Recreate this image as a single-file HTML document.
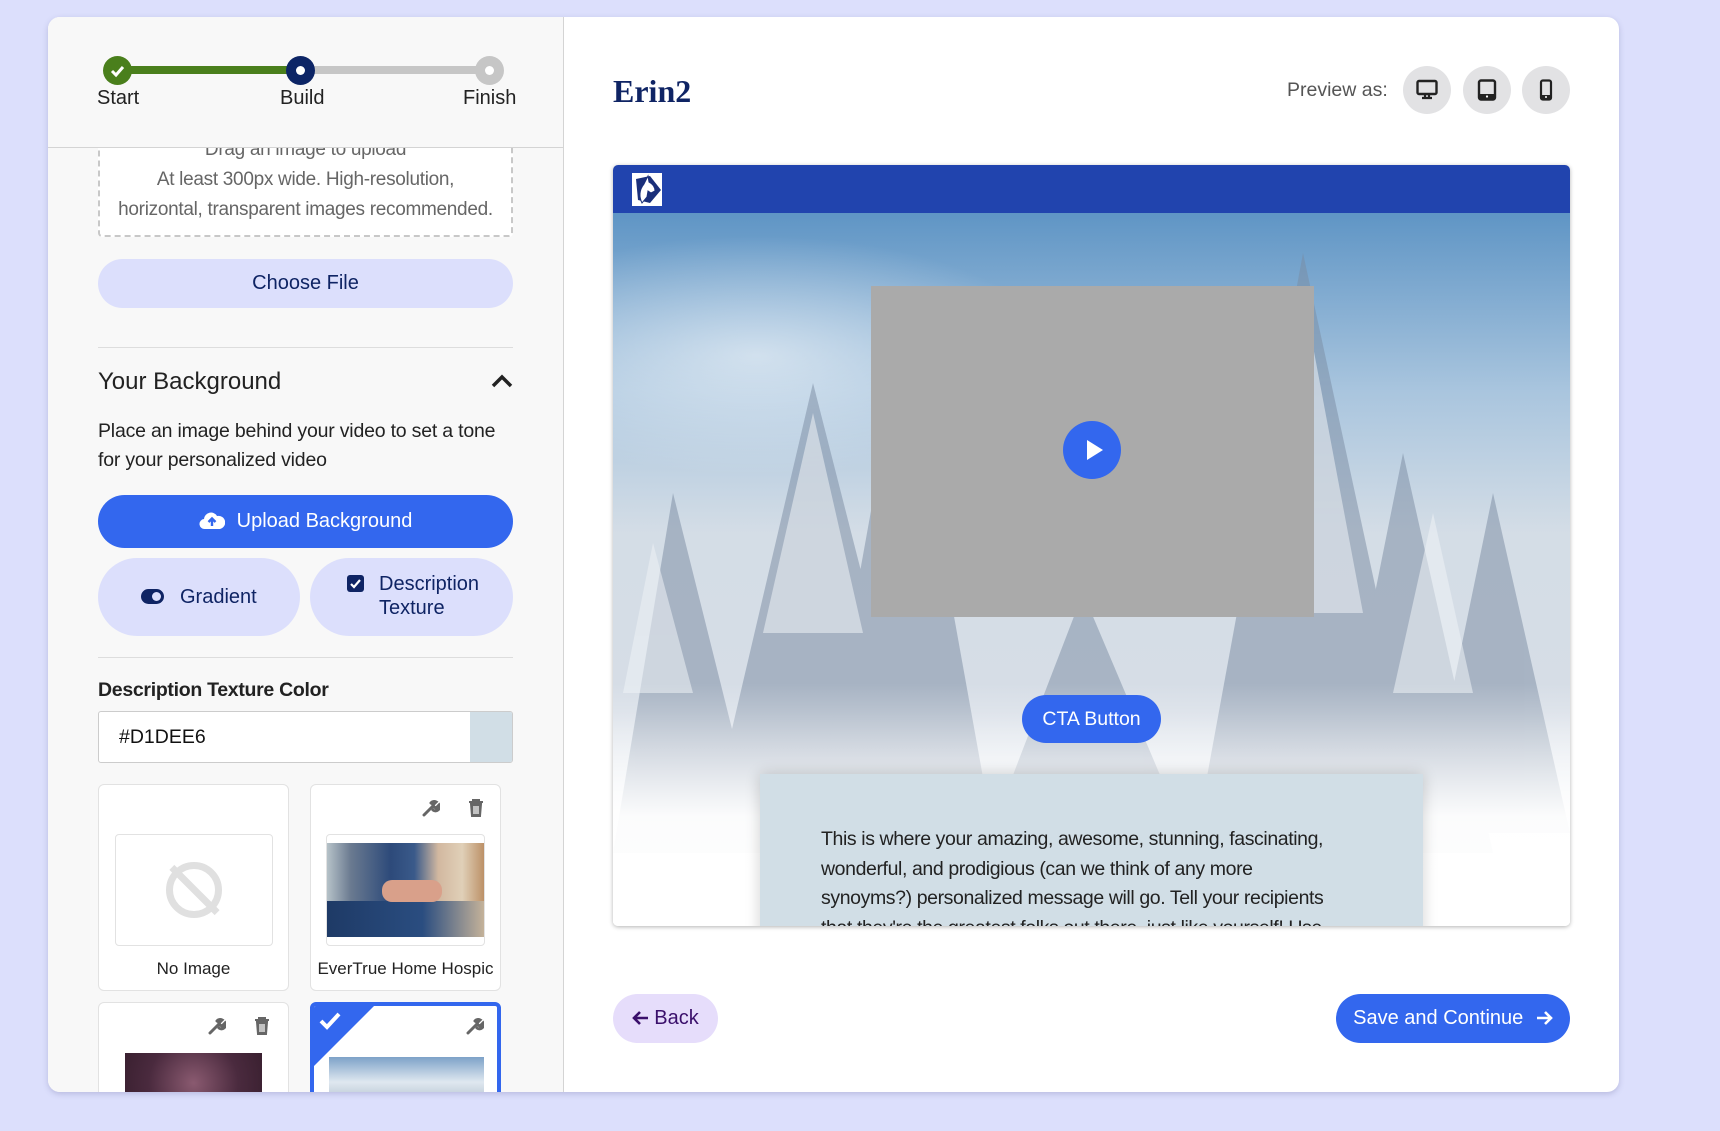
<!DOCTYPE html>
<html><head><meta charset="utf-8"><style>
*{box-sizing:border-box;margin:0;padding:0}
body{width:1720px;height:1131px;background:#dcdffc;font-family:"Liberation Sans",sans-serif;position:relative;overflow:hidden}
.abs{position:absolute}
.card{left:48px;top:17px;width:1571px;height:1075px;background:#fff;border-radius:12px;overflow:hidden;box-shadow:0 2px 6px rgba(80,80,140,.25)}
.left{left:0;top:0;width:516px;height:1075px;background:#f8f8f8;border-right:1px solid #d4d4d4;overflow:hidden}
.txt{white-space:nowrap}
.pill{border-radius:40px}
</style></head><body>
<div class="abs card">
 <div class="abs left">
  <div class="abs" style="left:50px;top:100px;width:415px;height:120px;border:2px dashed #c8c8c8;border-top:none;border-radius:4px;background:#fff"></div>
  <div class="abs txt" style="left:50px;top:118px;width:415px;text-align:center;color:#666;font-size:19px;line-height:30px;letter-spacing:-.3px">Drag an image to upload<br>At least 300px wide. High-resolution,<br>horizontal, transparent images recommended.</div>
  <div class="abs" style="left:0;top:0;width:516px;height:131px;background:#f8f8f8;border-bottom:1px solid #d4d4d4"></div>
  <div class="abs" style="left:69px;top:49px;width:184px;height:8px;background:#4a7f1c"></div>
  <div class="abs" style="left:253px;top:49px;width:188px;height:8px;background:#c6c6c6"></div>
  <div class="abs" style="left:55px;top:39px;width:29px;height:29px;border-radius:50%;background:#4a7f1c"></div>
  <svg class="abs" style="left:61px;top:45px" width="17" height="17" viewBox="0 0 17 17"><path d="M3 9l4 4 7-8" stroke="#fff" stroke-width="3" fill="none"/></svg>
  <div class="abs" style="left:238px;top:39px;width:29px;height:29px;border-radius:50%;background:#0d2566"></div>
  <div class="abs" style="left:248px;top:49px;width:9px;height:9px;border-radius:50%;background:#fff"></div>
  <div class="abs" style="left:427px;top:39px;width:29px;height:29px;border-radius:50%;background:#c6c6c6"></div>
  <div class="abs" style="left:437px;top:49px;width:9px;height:9px;border-radius:50%;background:#fff"></div>
  <div class="abs txt" style="left:49px;top:70px;font-size:20px;color:#222">Start</div>
  <div class="abs txt" style="left:232px;top:70px;font-size:20px;color:#222">Build</div>
  <div class="abs txt" style="left:415px;top:70px;font-size:20px;color:#222">Finish</div>
  <div class="abs pill" style="left:50px;top:242px;width:415px;height:49px;background:#dcdffc;color:#0f2464;font-size:20px;text-align:center;line-height:49px">Choose File</div>
  <div class="abs" style="left:50px;top:330px;width:415px;height:1px;background:#ddd"></div>
  <div class="abs txt" style="left:50px;top:351px;font-size:24px;color:#222">Your Background</div>
  <svg class="abs" style="left:443px;top:356px" width="22" height="16" viewBox="0 0 22 16"><path d="M2 13l9-9 9 9" stroke="#222" stroke-width="3.5" fill="none"/></svg>
  <div class="abs" style="left:50px;top:400px;font-size:19.5px;color:#222;line-height:29px;width:420px;letter-spacing:-.2px">Place an image behind your video to set a tone<br>for your personalized video</div>
  <div class="abs pill" style="left:50px;top:478px;width:415px;height:53px;background:#3367ee;color:#fff;font-size:20px;line-height:53px;text-align:center">
   <svg style="vertical-align:-3px;margin-right:12px" width="26" height="20" viewBox="0 0 26 20"><path d="M6 19a5 5 0 0 1-1-10 7 7 0 0 1 13-3 6 6 0 0 1 3 13z" fill="#fff"/><path d="M13 16V9M9.5 12l3.5-3.5 3.5 3.5" stroke="#3367ee" stroke-width="2.4" fill="none"/></svg>Upload Background</div>
  <div class="abs pill" style="left:50px;top:541px;width:202px;height:78px;background:#dcdffc;border-radius:40px"></div>
  <div class="abs" style="left:93px;top:572px;width:23px;height:15px;border-radius:8px;background:#0f2464"></div>
  <div class="abs" style="left:104px;top:575px;width:9px;height:9px;border-radius:50%;background:#dcdffc"></div>
  <div class="abs txt" style="left:132px;top:569px;font-size:20px;color:#0f2464">Gradient</div>
  <div class="abs pill" style="left:262px;top:541px;width:203px;height:78px;background:#dcdffc;border-radius:40px"></div>
  <div class="abs" style="left:299px;top:558px;width:17px;height:17px;border-radius:3px;background:#0f2464"></div>
  <svg class="abs" style="left:301px;top:560px" width="13" height="13" viewBox="0 0 13 13"><path d="M2 7l3 3 6-7" stroke="#fff" stroke-width="2.2" fill="none"/></svg>
  <div class="abs" style="left:331px;top:555px;font-size:20px;color:#0f2464;line-height:24px">Description<br>Texture</div>
  <div class="abs" style="left:50px;top:640px;width:415px;height:1px;background:#ddd"></div>
  <div class="abs txt" style="left:50px;top:662px;font-size:19.5px;color:#222;font-weight:bold;letter-spacing:-.3px">Description Texture Color</div>
  <div class="abs" style="left:50px;top:694px;width:415px;height:52px;border:1px solid #ccc;border-radius:3px;background:#fff;overflow:hidden">
   <div class="abs" style="right:0;top:0;width:42px;height:52px;background:#d1dee6"></div>
   <div class="abs txt" style="left:20px;top:14px;font-size:19.5px;color:#111">#D1DEE6</div>
  </div>
  <div class="abs" style="left:50px;top:767px;width:191px;height:207px;border:1px solid #e2e2e2;border-radius:6px;background:#fff"></div>
  <div class="abs" style="left:67px;top:817px;width:158px;height:112px;border:1px solid #e2e2e2;border-radius:4px;background:#fff"></div>
  <div class="abs" style="left:118px;top:845px;width:56px;height:56px;border-radius:50%;border:7px solid #e0e0e0"></div>
  <div class="abs" style="left:143px;top:841px;width:7px;height:64px;background:#e0e0e0;transform:rotate(-45deg)"></div>
  <div class="abs txt" style="left:50px;top:942px;width:191px;text-align:center;font-size:17px;color:#222">No Image</div>
  <div class="abs" style="left:262px;top:767px;width:191px;height:207px;border:1px solid #e2e2e2;border-radius:6px;background:#fff"></div>
  <svg class="abs" style="left:374px;top:782px" width="18" height="18" viewBox="0 0 18 18"><path d="M2 16l8-8M9 4a4 4 0 0 1 5 -1l-3 3 1 2 2 1 3-3a4 4 0 0 1-6 5" stroke="#666" stroke-width="3" fill="none" stroke-linecap="round"/></svg>
  <svg class="abs" style="left:420px;top:782px" width="16" height="18" viewBox="0 0 16 18"><path d="M1 3h14M5 3V1h6v2M3 5h10l-1 12H4z" stroke="#666" stroke-width="2" fill="#666"/><path d="M6 7v8M8 7v8M10 7v8" stroke="#fff" stroke-width="1.2"/></svg>
  <div class="abs" style="left:278px;top:817px;width:159px;height:112px;border:1px solid #e2e2e2;border-radius:4px;background:#fff;overflow:hidden">
   <div class="abs" style="left:0;top:8px;width:159px;height:94px;background:linear-gradient(90deg,#b6c2c8 0%,#6a7a90 15%,#2d4a7a 40%,#3a5a8a 55%,#d2b8a0 70%,#e0d0b8 85%,#b98b60 100%)"></div>
   <div class="abs" style="left:0;top:66px;width:159px;height:36px;background:linear-gradient(90deg,#1e3a66,#2a4d80 60%,#c9b59a)"></div>
   <div class="abs" style="left:55px;top:45px;width:60px;height:22px;border-radius:10px;background:#d9a08a"></div>
  </div>
  <div class="abs txt" style="left:262px;top:942px;width:191px;text-align:center;font-size:17px;color:#222">EverTrue Home Hospic</div>
  <div class="abs" style="left:50px;top:985px;width:191px;height:120px;border:1px solid #e2e2e2;border-radius:6px;background:#fff"></div>
  <svg class="abs" style="left:160px;top:1000px" width="18" height="18" viewBox="0 0 18 18"><path d="M2 16l8-8M9 4a4 4 0 0 1 5 -1l-3 3 1 2 2 1 3-3a4 4 0 0 1-6 5" stroke="#666" stroke-width="3" fill="none" stroke-linecap="round"/></svg>
  <svg class="abs" style="left:206px;top:1000px" width="16" height="18" viewBox="0 0 16 18"><path d="M1 3h14M5 3V1h6v2M3 5h10l-1 12H4z" stroke="#666" stroke-width="2" fill="#666"/><path d="M6 7v8M8 7v8M10 7v8" stroke="#fff" stroke-width="1.2"/></svg>
  <div class="abs" style="left:77px;top:1036px;width:137px;height:50px;background:radial-gradient(circle at 50% 60%,#8a5a70,#4a2a3e 60%,#3a2030)"></div>
  <div class="abs" style="left:262px;top:985px;width:191px;height:120px;border:4px solid #3367ee;border-radius:6px;background:#fff;overflow:hidden">
   <div class="abs" style="left:0;top:0;width:0;height:0;border-top:60px solid #3367ee;border-right:60px solid transparent"></div>
  </div>
  <svg class="abs" style="left:270px;top:994px" width="24" height="20" viewBox="0 0 24 20"><path d="M3 10l6 6L21 3" stroke="#fff" stroke-width="4" fill="none"/></svg>
  <svg class="abs" style="left:418px;top:1000px" width="18" height="18" viewBox="0 0 18 18"><path d="M2 16l8-8M9 4a4 4 0 0 1 5 -1l-3 3 1 2 2 1 3-3a4 4 0 0 1-6 5" stroke="#666" stroke-width="3" fill="none" stroke-linecap="round"/></svg>
  <div class="abs" style="left:281px;top:1040px;width:155px;height:50px;background:linear-gradient(180deg,#7da2c8,#dfe8f0 50%,#aab8c8)"></div>
 </div>
 <div class="abs txt" style="left:565px;top:56px;font-family:'Liberation Serif',serif;font-weight:bold;font-size:32px;color:#0f2464">Erin2</div>
 <div class="abs txt" style="left:1239px;top:62px;font-size:19.5px;color:#555">Preview as:</div>
 <div class="abs" style="left:1355px;top:49px;width:48px;height:48px;border-radius:50%;background:#e2e2e4"></div>
 <div class="abs" style="left:1415px;top:49px;width:48px;height:48px;border-radius:50%;background:#e2e2e4"></div>
 <div class="abs" style="left:1474px;top:49px;width:48px;height:48px;border-radius:50%;background:#e2e2e4"></div>
 <svg class="abs" style="left:1368px;top:62px" width="22" height="22" viewBox="0 0 22 22"><rect x="1.5" y="2" width="19" height="13" rx="1.5" fill="none" stroke="#222" stroke-width="2.4"/><path d="M9 15v3M13 15v3M6 19h10" stroke="#222" stroke-width="2.2"/></svg>
 <svg class="abs" style="left:1429px;top:62px" width="20" height="22" viewBox="0 0 20 22"><rect x="2" y="1.5" width="16" height="19" rx="2" fill="none" stroke="#222" stroke-width="2.4"/><rect x="2" y="15" width="16" height="5" fill="#222"/><circle cx="10" cy="17.5" r="1.1" fill="#fff"/></svg>
 <svg class="abs" style="left:1491px;top:62px" width="14" height="22" viewBox="0 0 14 22"><rect x="2" y="1.5" width="10" height="19" rx="1.8" fill="none" stroke="#222" stroke-width="2.2"/><rect x="2" y="16" width="10" height="4" fill="#222"/><circle cx="7" cy="18" r="1" fill="#fff"/></svg>
 <div class="abs" style="left:565px;top:148px;width:957px;height:761px;border-radius:5px;overflow:hidden;box-shadow:0 1px 4px rgba(0,0,0,.3)">
  <div class="abs" style="left:0;top:48px;width:957px;height:713px;background:
   radial-gradient(ellipse 300px 120px at 15% 20%,rgba(255,255,255,.55),transparent),
   linear-gradient(180deg,#5f95c5 0%,#a9c5de 25%,#d4dde6 45%,#d6dde6 70%,#eef1f5 82%,#ffffff 92%)"></div>
  <svg class="abs" style="left:0;top:48px" width="957" height="713" viewBox="0 0 957 713">
   <defs><linearGradient id="sn" x1="0" y1="0" x2="0" y2="1"><stop offset="0" stop-color="#fff" stop-opacity="0"/><stop offset=".55" stop-color="#fff" stop-opacity=".95"/><stop offset="1" stop-color="#fff"/></linearGradient></defs>
   <g fill="#7a8ba2" opacity=".5">
    <path d="M60 280L0 640h150z"/><path d="M200 170L90 640h230z"/><path d="M290 120L200 620h180z"/>
    <path d="M690 40L580 640h240z"/><path d="M790 240L710 640h170z"/><path d="M880 280L810 620h147z"/>
    <path d="M470 380L370 640h210z"/>
   </g>
   <g fill="#eef2f6" opacity=".55">
    <path d="M200 200L150 420h100z"/><path d="M690 80L630 400h120z"/><path d="M820 300L780 480h80z"/><path d="M40 330L10 480h70z"/>
   </g>
   <rect x="0" y="470" width="957" height="243" fill="url(#sn)"/>
  </svg>
  <div class="abs" style="left:0;top:0;width:957px;height:48px;background:#2144ae"></div>
  <div class="abs" style="left:19px;top:8px;width:30px;height:33px;background:#fff"></div>
  <svg class="abs" style="left:19px;top:8px" width="30" height="33" viewBox="0 0 30 33"><path d="M4 6l14-3 11 14-11 13-12-3z" fill="#1a2f7a"/><path d="M10 30c-3-6-3-13 2-19l4-8 1 6c4 2 6 5 6 9l-4 2-3-2-1 6z" fill="#fff" stroke="#1a2f7a" stroke-width="1"/></svg>
  <div class="abs" style="left:258px;top:121px;width:443px;height:331px;background:#aaaaaa"></div>
  <div class="abs" style="left:450px;top:256px;width:58px;height:58px;border-radius:50%;background:#3367ee"></div>
  <svg class="abs" style="left:472px;top:273px" width="20" height="24" viewBox="0 0 20 24"><path d="M2 2l16 10-16 10z" fill="#fff"/></svg>
  <div class="abs pill" style="left:409px;top:530px;width:139px;height:48px;background:#3367ee;color:#fff;font-size:19.5px;line-height:48px;text-align:center">CTA Button</div>
  <div class="abs" style="left:147px;top:609px;width:663px;height:170px;background:#d1dee6;box-shadow:0 0 14px rgba(0,0,0,.18)"></div>
  <div class="abs" style="left:208px;top:660px;width:590px;font-size:19.5px;line-height:29.5px;color:#222;height:101px;overflow:hidden;white-space:nowrap;letter-spacing:-.4px">This is where your amazing, awesome, stunning, fascinating,<br>wonderful, and prodigious (can we think of any more<br>synoyms?) personalized message will go. Tell your recipients<br>that they're the greatest folks out there, just like yourself! Use</div>
 </div>
 <div class="abs pill" style="left:565px;top:977px;width:105px;height:49px;background:#e6ddfb;color:#3a0f6b;font-size:20px;line-height:49px;text-align:center">
  <svg style="vertical-align:-2px;margin-right:4px" width="18" height="16" viewBox="0 0 18 16"><path d="M16 8H3M8 2L2 8l6 6" stroke="#3a0f6b" stroke-width="2.6" fill="none"/></svg>Back</div>
 <div class="abs pill" style="left:1288px;top:977px;width:234px;height:49px;background:#3367ee;color:#fff;font-size:20px;line-height:49px;text-align:center">Save and Continue
  <svg style="vertical-align:-2px;margin-left:6px" width="18" height="16" viewBox="0 0 18 16"><path d="M2 8h13M10 2l6 6-6 6" stroke="#fff" stroke-width="2.6" fill="none"/></svg></div>
</div>
</body></html>
